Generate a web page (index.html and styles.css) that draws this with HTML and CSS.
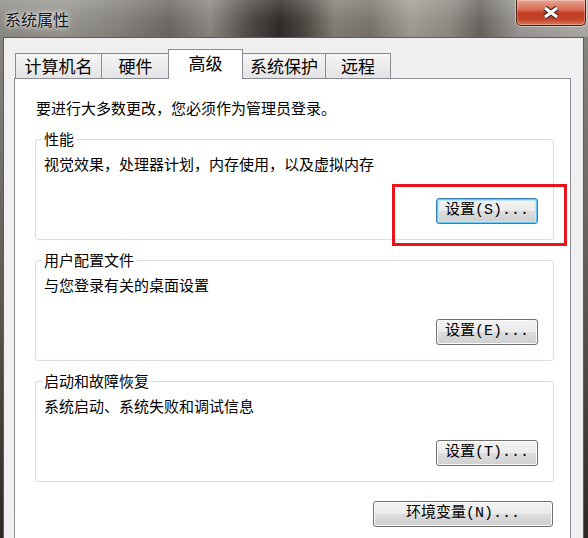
FILE: index.html
```html
<!DOCTYPE html>
<html lang="zh-CN">
<head>
  <meta charset="UTF-8" />
  <meta name="viewport" content="width=device-width, initial-scale=1.0"/>
  <title>系统属性</title>
  <link rel="stylesheet" href="styles.css">
</head>
<body>

  <div class="window">

    <div class="titlebar">
      <span class="title">系统属性</span>
      <button class="close" type="button" aria-label="关闭">
        <svg width="18" height="13" viewBox="0 0 18 13">
          <path d="M3 2 L15 11 M15 2 L3 11" stroke="#3a2622" stroke-width="5.5" fill="none"/>
          <path d="M3 2 L15 11 M15 2 L3 11" stroke="#fff" stroke-width="3.2" fill="none"/>
        </svg>
      </button>
    </div>

    <div class="client">
      <div class="tabs">
        <div class="tab t-name">计算机名</div>
        <div class="tab t-hw">硬件</div>
        <div class="tab t-adv active">高级</div>
        <div class="tab t-prot">系统保护</div>
        <div class="tab t-remote">远程</div>
      </div>

      <div class="panel">
        <p class="intro">要进行大多数更改，您必须作为管理员登录。</p>

        <fieldset class="group">
          <legend>性能</legend>
          <p>视觉效果，处理器计划，内存使用，以及虚拟内存</p>
          <div class="actions">
            <button type="button" class="btn default">设置(S)...</button>
          </div>
        </fieldset>

        <fieldset class="group">
          <legend>用户配置文件</legend>
          <p>与您登录有关的桌面设置</p>
          <div class="actions">
            <button type="button" class="btn">设置(E)...</button>
          </div>
        </fieldset>

        <fieldset class="group">
          <legend>启动和故障恢复</legend>
          <p>系统启动、系统失败和调试信息</p>
          <div class="actions">
            <button type="button" class="btn">设置(T)...</button>
          </div>
        </fieldset>

        <div class="actions env">
          <button type="button" class="btn wide">环境变量(N)...</button>
        </div>
      </div>
    </div>

    <!-- red marker drawn over the performance settings button -->
    <div class="marker"></div>

  </div>

</body>
</html>
```

FILE: styles.css
```css
:root {
  --tab-border: #898c95;
  --group-border: #d5dfe5;
  --client-bg: #f0f0f0;
}

* {
  box-sizing: border-box;
}

body {
  margin: 0;
  width: 588px;
  height: 538px;
  overflow: hidden;
  font-family: "Noto Sans CJK SC", sans-serif;
  color: #000;
  background: linear-gradient(#8d8b86, #5e5852 55%, #2e2824);
}

.window {
  position: relative;
  height: 538px;
}

/* glass title bar */
.titlebar {
  height: 37px;
  display: flex;
  align-items: flex-start;
  background:
    linear-gradient(180deg, rgba(255, 255, 255, 0.16) 0, rgba(255, 255, 255, 0) 55%, rgba(0, 0, 0, 0.06) 100%),
    linear-gradient(90deg, #8f8d88 0, #9a9893 60px, #86837e 120px, #6d6964 170px, #8c8984 210px,
      #4f4b47 250px, #2f2c2a 280px, #4d4944 305px, #858079 335px, #7a766f 370px, #a29e97 410px,
      #8f8b85 450px, #6a6661 480px, #9d9b97 520px, #b0aeab 588px);
}

.title {
  margin: 8px 0 0 5px;
  font-size: 16px;
  line-height: 22px;
  color: #141414;
  text-shadow: 0 0 6px #fff, 0 0 3px rgba(255, 255, 255, 0.7);
}

.close {
  margin: 0 2px 0 auto;
  width: 70px;
  height: 26px;
  padding: 0;
  border: 1px solid #4a1c12;
  border-top: none;
  border-radius: 0 0 5px 5px;
  background: linear-gradient(#e9a593, #d56a52 40%, #c23a20 52%, #c5442a 78%, #d87a5c);
  box-shadow: 0 0 0 1px rgba(255, 255, 255, 0.45), inset 0 0 0 1px rgba(255, 255, 255, 0.3);
  display: flex;
  align-items: center;
  justify-content: center;
}

.close svg {
  display: block;
}

/* dialog body */
.client {
  margin-left: 3px;
  width: 581px;
  height: 501px;
  border: 1px solid #5c5c5c;
  border-bottom: none;
  background: var(--client-bg);
  padding: 11px 12px 0 10px;
}

.tabs {
  display: flex;
  align-items: flex-end;
  height: 29px;
  padding-left: 1px;
}

.tab {
  height: 25px;
  margin-right: -1px;
  border: 1px solid var(--tab-border);
  border-bottom: none;
  background: linear-gradient(#f5f5f5, #e4e4e4);
  font-size: 17px;
  line-height: 23px;
  text-align: center;
}

.t-name { width: 87px; }
.t-hw { width: 69px; }
.t-adv { width: 75px; }
.t-prot { width: 84px; }
.t-remote { width: 66px; }

.tab.active {
  position: relative;
  z-index: 1;
  height: 30px;
  margin-left: -1px;
  margin-bottom: -1px;
  background: #fff;
  line-height: 26px;
}

.panel {
  height: 470px;
  border: 1px solid var(--tab-border);
  background: #fff;
  padding: 20px 16px 0 20px;
}

.intro {
  margin: 0 0 0 1px;
  font-size: 15px;
  line-height: 18px;
}

.group {
  min-width: 0;
  margin: 12px 0 0;
  padding: 8px 15px 15px 8px;
  border: 1px solid var(--group-border);
  border-radius: 3px;
}

.group:first-of-type {
  margin-top: 14px;
}

.group legend {
  padding: 0 2px;
  margin-left: -2px;
  font-size: 15px;
  line-height: 16px;
}

.group p {
  margin: 0;
  font-size: 15px;
  line-height: 18px;
}

.actions {
  display: flex;
  justify-content: flex-end;
  margin-top: 25px;
}

.actions.env {
  margin-top: 19px;
  margin-right: 1px;
}

.btn {
  width: 102px;
  height: 26px;
  padding: 0;
  border: 1px solid #707070;
  border-radius: 3px;
  background: linear-gradient(#f2f2f2 0%, #ebebeb 50%, #dddddd 51%, #cfcfcf 100%);
  box-shadow: inset 0 0 0 1px #fcfcfc;
  font-family: "Liberation Mono", "Noto Sans CJK SC", monospace;
  font-size: 15px;
  line-height: 24px;
  color: #000;
  white-space: nowrap;
}

.btn.default {
  border-color: #3c7fb1;
  box-shadow: inset 0 0 0 1px #62c8f2, inset 0 0 0 2px #bde8fb;
}

.btn.wide {
  width: 180px;
}

.marker {
  position: absolute;
  left: 392px;
  top: 184px;
  width: 175px;
  height: 62px;
  border: 3px solid #e8141c;
  pointer-events: none;
}
```
